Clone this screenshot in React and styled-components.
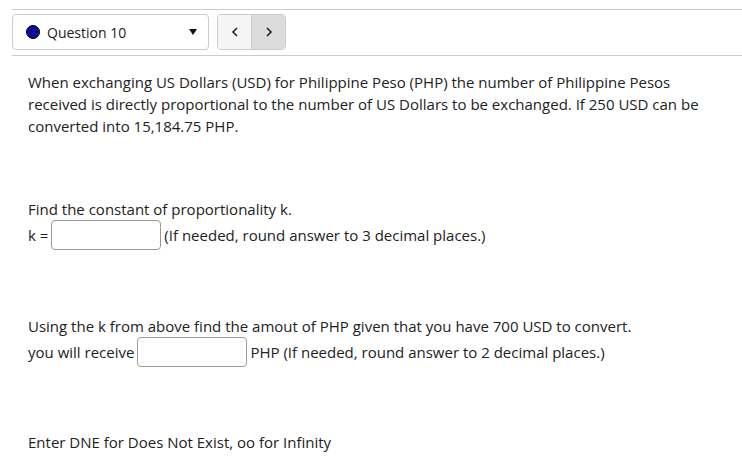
import React from "react";
import styled, { createGlobalStyle } from "styled-components";

const GlobalStyle = createGlobalStyle`
  body {
    margin: 0;
    background: #fff;
    font-family: "Open Sans", "Liberation Sans", sans-serif;
    color: #222;
  }
`;

// Question navigation bar
const NavBar = styled.div`
  margin: 9px 0 0 12px;
  padding: 4px 0 5px;
  border-top: 1px solid #ccc;
  border-bottom: 1px solid #ccc;
  display: flex;
  align-items: center;
`;

const Select = styled.div`
  width: 197px;
  height: 36px;
  box-sizing: border-box;
  border: 1px solid #ccc;
  border-radius: 4px;
  display: flex;
  align-items: center;
  padding: 0 0 0 13px;
  font-size: 14px;
  color: #222;
`;

const Dot = styled.span`
  width: 12px;
  height: 12px;
  border-radius: 50%;
  background: #0a0a9c;
  border: 1px solid #000;
  margin-right: 7px;
`;

const Caret = styled.span`
  margin-left: auto;
  margin-right: 11px;
  width: 0;
  height: 0;
  border-left: 4px solid transparent;
  border-right: 4px solid transparent;
  border-top: 6px solid #111;
`;

const ButtonGroup = styled.div`
  display: flex;
  margin-left: 8px;
  border: 1px solid #ccc;
  border-radius: 4px;
  overflow: hidden;
  height: 36px;
  box-sizing: border-box;
`;

const NavButton = styled.div`
  width: 33px;
  display: flex;
  align-items: center;
  justify-content: center;
  background: ${(p) => (p.$active ? "#dcdcdc" : "#f5f5f5")};
  & + & {
    border-left: 1px solid #ccc;
  }
`;

const Content = styled.div`
  padding: 15px 20px 0 28px;
  font-size: 15px;
  line-height: 22px;
`;

const Paragraph = styled.p`
  margin: 0;
  margin-top: ${(p) => p.$gap || 0}px;
`;

const AnswerRow = styled.div`
  display: flex;
  align-items: center;
  height: 30px;
`;

const AnswerInput = styled.input`
  width: 110px;
  height: 30px;
  box-sizing: border-box;
  border: 1px solid #999;
  border-radius: 4px;
  margin: 0 3px;
  padding: 0 4px;
  font: inherit;
`;

const Chevron = ({ dir }) => (
  <svg width="8" height="10" viewBox="0 0 8 10">
    <path
      d={dir === "left" ? "M6 1 L2 5 L6 9" : "M2 1 L6 5 L2 9"}
      fill="none"
      stroke="#222"
      strokeWidth="1.6"
    />
  </svg>
);

export default function App() {
  return (
    <>
      <GlobalStyle />
      <NavBar>
        <Select>
          <Dot />
          Question 10
          <Caret />
        </Select>
        <ButtonGroup>
          <NavButton>
            <Chevron dir="left" />
          </NavButton>
          <NavButton $active>
            <Chevron dir="right" />
          </NavButton>
        </ButtonGroup>
      </NavBar>
      <Content>
        <Paragraph>
          When exchanging US Dollars (USD) for Philippine Peso (PHP) the number
          of Philippine Pesos received is directly proportional to the number
          of US Dollars to be exchanged. If 250 USD can be converted into
          15,184.75 PHP.
        </Paragraph>
        <Paragraph $gap={61}>Find the constant of proportionality k.</Paragraph>
        <AnswerRow>
          k =<AnswerInput />
          (If needed, round answer to 3 decimal places.)
        </AnswerRow>
        <Paragraph $gap={65}>
          Using the k from above find the amout of PHP given that you have 700
          USD to convert.
        </Paragraph>
        <AnswerRow>
          you will receive
          <AnswerInput />
          PHP (If needed, round answer to 2 decimal places.)
        </AnswerRow>
        <Paragraph $gap={64}>Enter DNE for Does Not Exist, oo for Infinity</Paragraph>
      </Content>
    </>
  );
}
